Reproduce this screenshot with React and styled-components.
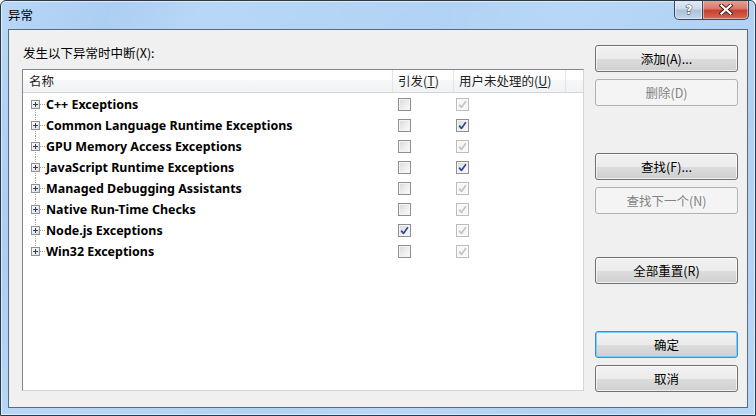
import React from "react";
import styled, { createGlobalStyle } from "styled-components";

const GlobalStyle = createGlobalStyle`
  html, body {
    margin: 0;
    padding: 0;
    background: #ffffff;
  }
  body {
    font-family: "Noto Sans", "Noto Sans CJK SC", sans-serif;
    font-size: 12px;
  }
`;

const CJK = `"Noto Sans CJK SC", "Noto Sans", sans-serif`;

const Window = styled.div`
  width: 756px;
  height: 416px;
  box-sizing: border-box;
  display: flex;
  flex-direction: column;
  border: 1px solid #2c3a48;
  border-radius: 6px 6px 0 0;
  background:
    linear-gradient(115deg, rgba(255,255,255,0) 0%, rgba(150,190,230,0.35) 12%, rgba(255,255,255,0) 22%, rgba(160,200,235,0.3) 48%, rgba(255,255,255,0) 60%, rgba(150,190,230,0.25) 85%, rgba(255,255,255,0) 100%),
    #b8d7f8;
  box-shadow: inset 0 0 0 1px rgba(255,255,255,0.55);
  overflow: hidden;
`;

const TitleBar = styled.div`
  height: 28px;
  flex: none;
  display: flex;
  align-items: flex-start;
  justify-content: space-between;
  padding-left: 7px;
`;

const Title = styled.span`
  font-family: ${CJK};
  font-size: 12.5px;
  line-height: 16px;
  margin-top: 6px;
  color: #000;
`;

const Caption = styled.div`
  display: flex;
  margin-right: 6px;
  margin-top: -1px;
`;

const CaptionButton = styled.div`
  width: ${(p) => p.$w}px;
  height: 20px;
  box-sizing: border-box;
  display: flex;
  align-items: center;
  justify-content: center;
  border: 1px solid #3b4756;
  border-top: none;
  border-radius: ${(p) => (p.$close ? "0 0 5px 0" : "0 0 0 5px")};
  background: ${(p) =>
    p.$close
      ? "linear-gradient(#e8a697 0%, #d8786a 45%, #c8402e 55%, #d46a52 100%)"
      : "linear-gradient(#e3ecf6 0%, #cbdaea 45%, #aec3da 55%, #c2d5ea 100%)"};
  box-shadow: inset 0 0 0 1px rgba(255, 255, 255, 0.45);
  & + & {
    border-left: none;
  }
`;

const Client = styled.div`
  flex: 1;
  margin: 0 7px 7px 7px;
  border: 1px solid #5b6b7c;
  background: #f0f0f0;
  display: grid;
  grid-template-columns: 562px 143px;
  column-gap: 11px;
  padding: 0 11px 0 13px;
`;

const LeftPane = styled.div`
  display: flex;
  flex-direction: column;
  padding-bottom: 16px;
`;

const Label = styled.div`
  font-family: ${CJK};
  font-size: 12.5px;
  line-height: 16px;
  margin: 15px 0 8px 1px;
  color: #000;
`;

const ListBox = styled.div`
  flex: 1;
  background: #ffffff;
  border-top: 1px solid #828790;
  border-left: 1px solid #828790;
  border-right: 1px solid #d6d6d6;
  border-bottom: 1px solid #d6d6d6;
  display: flex;
  flex-direction: column;
`;

const Header = styled.div`
  height: 22px;
  display: flex;
  border-bottom: 1px solid #d5d5d5;
  background: linear-gradient(#ffffff 0%, #ffffff 45%, #f6f7f8 46%, #f2f3f5 100%);
`;

const HeadCell = styled.div`
  width: ${(p) => p.$w}px;
  flex: ${(p) => (p.$w ? "none" : "1")};
  box-sizing: border-box;
  padding-left: ${(p) => p.$pad}px;
  border-right: ${(p) => (p.$w ? "1px solid #e3e5e7" : "none")};
  font-family: ${CJK};
  font-size: 12.5px;
  line-height: 22px;
  color: #1e1e1e;
  u {
    text-underline-offset: 1px;
  }
`;

const Rows = styled.div`
  padding-top: 1px;
`;

const Row = styled.div`
  height: 21px;
  display: flex;
  align-items: center;
`;

const NameCell = styled.div`
  width: 370px;
  height: 100%;
  display: flex;
  align-items: center;
  position: relative;
  padding-left: 8px;
  box-sizing: border-box;
`;

/* dotted tree guide running through the expander column */
const Guide = styled.span`
  position: absolute;
  left: 12px;
  top: ${(p) => (p.$first ? "50%" : "0")};
  bottom: ${(p) => (p.$last ? "50%" : "0")};
  border-left: 1px dotted #a0a0a0;
`;

const Expander = styled.svg`
  width: 9px;
  height: 9px;
  flex: none;
  position: relative;
  z-index: 1;
`;

const Branch = styled.span`
  width: 5px;
  margin: 0 1px 0 0;
  border-top: 1px dotted #a0a0a0;
  flex: none;
`;

const ItemName = styled.span`
  font-weight: 700;
  font-size: 12.45px;
  color: #000;
  white-space: nowrap;
`;

const CheckCell = styled.div`
  width: ${(p) => p.$w}px;
  padding-left: ${(p) => p.$pad}px;
  box-sizing: border-box;
  display: flex;
  align-items: center;
`;

const Box = styled.span`
  width: 13px;
  height: 13px;
  box-sizing: border-box;
  border: 1px solid ${(p) => (p.$dim ? "#bdbdbd" : "#8e8f8f")};
  background: ${(p) =>
    p.$dim
      ? "#f7f7f7"
      : "linear-gradient(135deg, #d6d7d9 0%, #eeeeee 55%, #fbfbfb 100%)"};
  box-shadow: inset 0 0 0 1px ${(p) => (p.$dim ? "#fafafa" : "#f4f4f4")};
  display: flex;
  align-items: center;
  justify-content: center;
`;

const ButtonColumn = styled.div`
  display: flex;
  flex-direction: column;
  padding-top: 15px;
`;

const Button = styled.div`
  height: 27px;
  box-sizing: border-box;
  margin-top: ${(p) => p.$top || 0}px;
  border-radius: 3px;
  border: 1px solid
    ${(p) => (p.$disabled ? "#adb2b5" : p.$default ? "#3c8fd0" : "#707070")};
  background: ${(p) =>
    p.$disabled
      ? "#f4f4f4"
      : "linear-gradient(#f2f2f2 0%, #ebebeb 50%, #dddddd 51%, #cfcfcf 100%)"};
  box-shadow: inset 0 0 0 1px
    ${(p) =>
      p.$disabled ? "#f4f4f4" : p.$default ? "#6fd3f7" : "rgba(255,255,255,0.7)"};
  display: flex;
  align-items: center;
  justify-content: center;
  font-family: ${CJK};
  font-size: 12.5px;
  color: ${(p) => (p.$disabled ? "#838383" : "#000")};
`;

const items = [
  { name: "C++ Exceptions", thrown: false, user: "dim" },
  { name: "Common Language Runtime Exceptions", thrown: false, user: "on" },
  { name: "GPU Memory Access Exceptions", thrown: false, user: "dim" },
  { name: "JavaScript Runtime Exceptions", thrown: false, user: "on" },
  { name: "Managed Debugging Assistants", thrown: false, user: "dim" },
  { name: "Native Run-Time Checks", thrown: false, user: "dim" },
  { name: "Node.js Exceptions", thrown: true, user: "dim" },
  { name: "Win32 Exceptions", thrown: false, user: "dim" },
];

const Tick = ({ color }) => (
  <svg width="9" height="9" viewBox="0 0 9 9">
    <path
      d="M1.2 4.6 L3.4 7.4 L7.9 1.2"
      fill="none"
      stroke={color}
      strokeWidth="1.7"
      strokeLinejoin="round"
    />
  </svg>
);

const CheckBox = ({ state }) => (
  <Box $dim={state === "dim"}>
    {state === "on" && <Tick color="#2d4a92" />}
    {state === "dim" && <Tick color="#c4c4c4" />}
  </Box>
);

const Plus = () => (
  <Expander viewBox="0 0 9 9">
    <defs>
      <linearGradient id="pl" x1="0" y1="0" x2="1" y2="1">
        <stop offset="0" stopColor="#ffffff" />
        <stop offset="1" stopColor="#d9d9d9" />
      </linearGradient>
    </defs>
    <rect x="0.5" y="0.5" width="8" height="8" fill="url(#pl)" stroke="#919191" />
    <path d="M2 4.5 H7 M4.5 2 V7" stroke="#2f3d5a" strokeWidth="1" />
  </Expander>
);

const HelpGlyph = () => (
  <svg width="12" height="13" viewBox="0 0 12 13">
    <text
      x="6"
      y="11"
      textAnchor="middle"
      fontFamily="DejaVu Sans, sans-serif"
      fontWeight="700"
      fontSize="12"
      fill="#ffffff"
      stroke="#3a3a3a"
      strokeWidth="0.9"
      paintOrder="stroke"
    >
      ?
    </text>
  </svg>
);

const CloseGlyph = () => (
  <svg width="14" height="11" viewBox="0 0 14 11">
    <path d="M2.5 1.5 L11.5 9.5 M11.5 1.5 L2.5 9.5" stroke="#3a2020" strokeWidth="4" strokeLinecap="square" />
    <path d="M2.5 1.5 L11.5 9.5 M11.5 1.5 L2.5 9.5" stroke="#ffffff" strokeWidth="2.2" strokeLinecap="square" />
  </svg>
);

export default function App() {
  return (
    <>
      <GlobalStyle />
      <Window>
        <TitleBar>
          <Title>异常</Title>
          <Caption>
            <CaptionButton $w={29}>
              <HelpGlyph />
            </CaptionButton>
            <CaptionButton $w={46} $close>
              <CloseGlyph />
            </CaptionButton>
          </Caption>
        </TitleBar>
        <Client>
          <LeftPane>
            <Label>发生以下异常时中断(X):</Label>
            <ListBox>
              <Header>
                <HeadCell $w={370} $pad={6}>名称</HeadCell>
                <HeadCell $w={61} $pad={5}>
                  引发(<u>T</u>)
                </HeadCell>
                <HeadCell $w={112} $pad={5}>
                  用户未处理的(<u>U</u>)
                </HeadCell>
                <HeadCell />
              </Header>
              <Rows>
                {items.map((it, i) => (
                  <Row key={it.name}>
                    <NameCell>
                      <Guide $first={i === 0} $last={i === items.length - 1} />
                      <Plus />
                      <Branch />
                      <ItemName>{it.name}</ItemName>
                    </NameCell>
                    <CheckCell $w={61} $pad={5}>
                      <CheckBox state={it.thrown ? "on" : "off"} />
                    </CheckCell>
                    <CheckCell $w={112} $pad={2}>
                      <CheckBox state={it.user} />
                    </CheckCell>
                  </Row>
                ))}
              </Rows>
            </ListBox>
          </LeftPane>
          <ButtonColumn>
            <Button>添加(A)...</Button>
            <Button $top={7} $disabled>删除(D)</Button>
            <Button $top={47}>查找(F)...</Button>
            <Button $top={7} $disabled>查找下一个(N)</Button>
            <Button $top={43}>全部重置(R)</Button>
            <Button $top={47} $default>确定</Button>
            <Button $top={7}>取消</Button>
          </ButtonColumn>
        </Client>
      </Window>
    </>
  );
}
